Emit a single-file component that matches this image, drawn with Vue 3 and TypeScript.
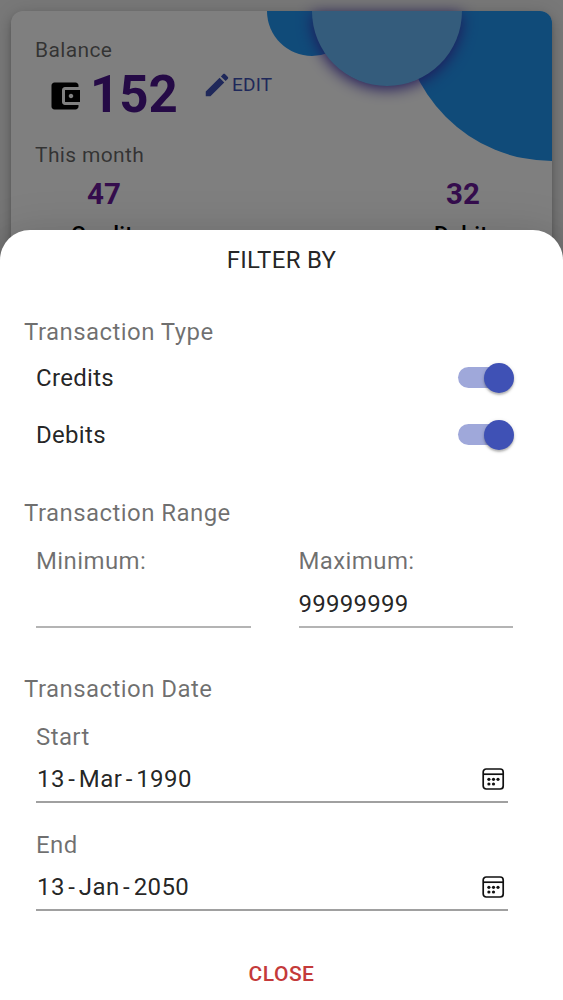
<script setup lang="ts">
import { reactive } from 'vue'

interface TypeToggle {
  label: string
  on: boolean
}

interface AmountField {
  label: string
  value: string
}

interface DateField {
  label: string
  parts: [string, string, string]
}

const toggles = reactive<TypeToggle[]>([
  { label: 'Credits', on: true },
  { label: 'Debits', on: true },
])

const amounts = reactive<AmountField[]>([
  { label: 'Minimum:', value: '' },
  { label: 'Maximum:', value: '99999999' },
])

const dates: DateField[] = [
  { label: 'Start', parts: ['13', 'Mar', '1990'] },
  { label: 'End', parts: ['13', 'Jan', '2050'] },
]

const calendarDots = [
  [6.9, 11.3], [11.5, 11.3], [16, 11.3],
  [6.9, 16], [11.5, 16],
]
</script>

<template>
  <div class="screen">
    <section class="card">
      <div class="blob blob-large"></div>
      <div class="blob blob-small"></div>
      <div class="blob blob-medium"></div>

      <p class="caption balance-caption">Balance</p>
      <div class="balance">
        <svg class="wallet" viewBox="0 0 24 24">
          <path d="M21 18v1c0 1.1-.9 2-2 2H5c-1.11 0-2-.9-2-2V5c0-1.1.89-2 2-2h14c1.1 0 2 .9 2 2v1h-9c-1.11 0-2 .9-2 2v8c0 1.1.89 2 2 2h9zm-9-2h10V8H12v8zm4-2.5c-.83 0-1.5-.67-1.5-1.5s.67-1.5 1.5-1.5 1.5.67 1.5 1.5-.67 1.5-1.5 1.5z" />
        </svg>
        <span class="amount">152</span>
        <span class="edit">
          <svg class="pencil" viewBox="0 0 24 24">
            <path d="M3 17.25V21h3.75L17.81 9.94l-3.75-3.75L3 17.25zM20.71 7.04c.39-.39.39-1.02 0-1.41l-2.34-2.34c-.39-.39-1.02-.39-1.41 0l-1.83 1.83 3.75 3.75 1.83-1.83z" />
          </svg>
          <span class="edit-text">EDIT</span>
        </span>
      </div>

      <p class="caption month-caption">This month</p>
      <div class="totals">
        <div class="total">
          <span class="total-value">47</span>
          <span class="total-label">Credits</span>
        </div>
        <div class="total">
          <span class="total-value">32</span>
          <span class="total-label">Debits</span>
        </div>
      </div>
    </section>

    <div class="backdrop"></div>

    <section class="sheet">
      <h2 class="title">FILTER BY</h2>

      <div class="group type-group">
        <h3 class="heading">Transaction Type</h3>
        <div v-for="t in toggles" :key="t.label" class="toggle-row" @click="t.on = !t.on">
          <span>{{ t.label }}</span>
          <span class="switch" :class="{ on: t.on }"><span class="thumb"></span></span>
        </div>
      </div>

      <div class="group range-group">
        <h3 class="heading">Transaction Range</h3>
        <div class="amounts">
          <label v-for="a in amounts" :key="a.label" class="field">
            <span class="field-label">{{ a.label }}</span>
            <input v-model="a.value" class="field-input" type="text" />
          </label>
        </div>
      </div>

      <div class="group date-group">
        <h3 class="heading">Transaction Date</h3>
        <div v-for="d in dates" :key="d.label" class="date-field">
          <span class="field-label">{{ d.label }}</span>
          <div class="date-value">
            <span class="date-text">
              <span>{{ d.parts[0] }}</span><span class="dash">-</span><span>{{ d.parts[1] }}</span><span class="dash">-</span><span>{{ d.parts[2] }}</span>
            </span>
            <svg class="calendar" viewBox="0 0 23 23">
              <rect x="1.2" y="1" width="20" height="20" rx="3" />
              <path d="M1.2 6.2h20" />
              <circle v-for="(p, i) in calendarDots" :key="i" :cx="p[0]" :cy="p[1]" r="1.6" />
            </svg>
          </div>
        </div>
      </div>

      <button class="close" type="button">CLOSE</button>
    </section>
  </div>
</template>

<style>
body {
  margin: 0;
}
</style>

<style scoped>
.screen {
  position: relative;
  box-sizing: border-box;
  width: 563px;
  height: 1000px;
  padding: 11px;
  overflow: hidden;
  background: #f0f0f0;
  font-family: Roboto, "Liberation Sans", sans-serif;
  font-size: 24px;
  color: rgba(0, 0, 0, 0.87);
}

p, h2, h3 {
  margin: 0;
  font-weight: 400;
}

.card {
  position: relative;
  box-sizing: border-box;
  height: 330px;
  padding: 24px 24px 0;
  border-radius: 12px;
  background: #fff;
  box-shadow: 0 3px 5px -1px rgba(0, 0, 0, 0.2), 0 5px 12px rgba(0, 0, 0, 0.14), 0 2px 20px rgba(0, 0, 0, 0.12);
}

.blob {
  position: absolute;
  top: 0;
  background: #2196f3;
}

.blob-large {
  right: 0;
  width: 150px;
  height: 150px;
  border-radius: 0 12px 0 150px;
}

.blob-small {
  left: 256px;
  width: 90px;
  height: 45px;
  border-radius: 0 0 45px 45px;
}

.blob-medium {
  left: 301px;
  width: 150px;
  height: 75px;
  border-radius: 0 0 75px 75px;
  background: #68b9f8;
  box-shadow: 0 3px 15px #3f2fb0;
}

.caption {
  font-size: 21px;
  line-height: 30px;
  letter-spacing: 0.35px;
  color: rgba(0, 0, 0, 0.6);
}

.balance {
  display: flex;
  align-items: flex-start;
  height: 60px;
  padding: 0 0 15px 12px;
}

.wallet {
  width: 36px;
  height: 36px;
  margin-top: 13px;
}

.amount {
  width: 88px;
  margin-left: 7px;
  font-size: 51px;
  font-weight: 700;
  line-height: 60px;
  color: #4a148c;
}

.edit {
  display: flex;
  align-items: center;
  margin: 5px 0 0 24px;
  color: #3f51b5;
}

.pencil {
  width: 30px;
  height: 30px;
  fill: currentColor;
}

.edit-text {
  font-size: 19px;
  line-height: 30px;
  letter-spacing: 0.2px;
}

.totals {
  display: flex;
  justify-content: space-between;
  padding: 0 20px 0 24px;
}

.total {
  display: flex;
  flex-direction: column;
  align-items: center;
  width: 90px;
}

.total-value {
  font-size: 29.5px;
  font-weight: 700;
  line-height: 48px;
  color: #6a1b9a;
}

.total-label {
  padding-left: 8px;
  font-size: 22.5px;
  font-weight: 500;
  line-height: 33px;
  letter-spacing: 0.3px;
  color: #000;
}

.backdrop {
  position: absolute;
  inset: 0;
  background: rgba(0, 0, 0, 0.5);
}

.sheet {
  position: absolute;
  inset: 230px 0 0;
  border-radius: 30px 30px 0 0;
  background: #fff;
  box-shadow: 0 12px 15px -7px rgba(0, 0, 0, 0.2), 0 24px 36px 3px rgba(0, 0, 0, 0.14), 0 9px 45px 8px rgba(0, 0, 0, 0.12);
}

.title {
  height: 60px;
  font-size: 24px;
  line-height: 60px;
  letter-spacing: 0.3px;
  text-align: center;
}

.group {
  padding: 0 24px;
}

.type-group {
  padding-top: 27px;
}

.range-group {
  padding-top: 34px;
}

.date-group {
  padding-top: 46px;
}

.heading {
  font-size: 24px;
  line-height: 31px;
  height: 30px;
  letter-spacing: 0.44px;
  color: rgba(0, 0, 0, 0.56);
}

.toggle-row {
  display: flex;
  align-items: center;
  justify-content: space-between;
  height: 57px;
  padding: 0 24px 0 12px;
  letter-spacing: 0.3px;
}

.heading + .toggle-row {
  margin-top: 2px;
}

.toggle-row:last-child {
  margin-bottom: 1px;
}

.switch {
  display: flex;
  align-items: center;
  width: 53px;
  height: 21px;
  margin-right: 4px;
  border-radius: 11px;
  background: #bdbdbd;
}

.thumb {
  width: 30px;
  height: 30px;
  border-radius: 50%;
  background: #fafafa;
  box-shadow: 0 2px 2px rgba(0, 0, 0, 0.22), 0 1px 4px rgba(0, 0, 0, 0.14);
}

.switch.on {
  justify-content: flex-end;
  background: #9fa8da;
}

.switch.on .thumb {
  margin-right: -3px;
  background: #3f51b5;
}

.amounts {
  display: flex;
  gap: 48px;
  padding: 18px 26px 0 12px;
}

.field {
  display: flex;
  flex: 1;
  flex-direction: column;
  min-width: 0;
}

.field-label {
  display: block;
  line-height: 30px;
  letter-spacing: 0.4px;
  color: rgba(0, 0, 0, 0.56);
}

.field-input {
  box-sizing: border-box;
  width: 100%;
  height: 52px;
  padding: 5px 0 0;
  border: 0;
  border-bottom: 2px solid #b4b4b4;
  outline: 0;
  background: none;
  font: inherit;
  letter-spacing: 0.25px;
  color: inherit;
}

.date-field {
  margin-top: 27px;
  padding: 0 31px 0 12px;
}

.heading + .date-field {
  margin-top: 18px;
}

.date-value {
  display: flex;
  align-items: center;
  justify-content: space-between;
  height: 49px;
  padding-right: 3px;
  border-bottom: 2px solid #a0a0a0;
}

.date-text {
  padding: 4px 0 0 1px;
  letter-spacing: 0.4px;
}

.dash {
  padding: 0 3.5px;
}

.calendar {
  width: 23px;
  height: 23px;
  margin-top: 5px;
  fill: none;
  stroke: #111;
  stroke-width: 1.7;
}

.calendar circle {
  fill: #111;
  stroke: none;
}

.close {
  display: block;
  margin: 48px auto 0;
  padding: 0;
  border: 0;
  background: none;
  font: 500 21px/30px Roboto, "Liberation Sans", sans-serif;
  letter-spacing: 0.5px;
  color: #c43a3a;
}
</style>
